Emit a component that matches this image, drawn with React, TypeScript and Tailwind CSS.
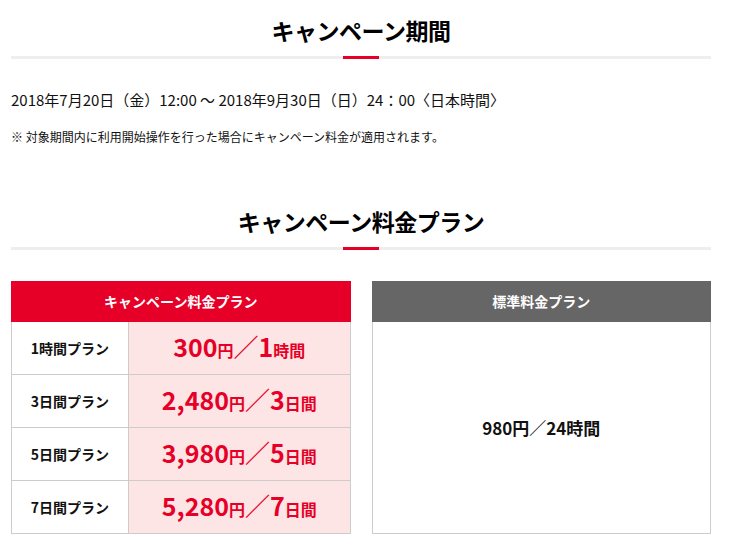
const rows = [
  { label: "1時間プラン", price: "300", unitNum: "1", unit: "時間" },
  { label: "3日間プラン", price: "2,480", unitNum: "3", unit: "日間" },
  { label: "5日間プラン", price: "3,980", unitNum: "5", unit: "日間" },
  { label: "7日間プラン", price: "5,280", unitNum: "7", unit: "日間" },
];

function SectionTitle({ children }: { children: React.ReactNode }) {
  return (
    <div>
      <h2 className="text-center text-[23px] font-bold leading-[36px] tracking-[-0.5px] text-black">
        {children}
      </h2>
      <div className="mt-[8px] flex h-[3px] justify-center bg-[#eeeeee]">
        <div className="h-[3px] w-[36px] bg-[#e60027]" />
      </div>
    </div>
  );
}

export default function App() {
  return (
    <div
      className="min-h-[547px] bg-white pt-[12px] text-[#111]"
      style={{ fontFamily: '"Noto Sans CJK JP", "Noto Sans", sans-serif' }}
    >
      <div className="ml-[11px] w-[700px]">
        <SectionTitle>キャンペーン期間</SectionTitle>

        <p className="mt-[31px] text-[15px] leading-[20px]">
          2018年7月20日（金）12:00 〜 2018年9月30日（日）24：00〈日本時間〉
        </p>
        <p className="mt-[18px] text-[12px] leading-[18px]">
          ※ 対象期間内に利用開始操作を行った場合にキャンペーン料金が適用されます。
        </p>

        <div className="mt-[57px]">
          <SectionTitle>キャンペーン料金プラン</SectionTitle>
        </div>

        <div className="mt-[31px] grid grid-cols-2 gap-[21px]">
          <div>
            <div className="flex h-[41px] items-center justify-center bg-[#e60027] text-[14px] font-bold text-white">
              キャンペーン料金プラン
            </div>
            <div className="border-x border-b border-[#cccccc]">
              {rows.map((r, i) => (
                <div
                  key={r.label}
                  className={`grid grid-cols-[117px_1fr] ${i > 0 ? "h-[53px] border-t border-[#cccccc]" : "h-[52px]"}`}
                >
                  <div className="flex items-center justify-center border-r border-[#cccccc] text-[14px] font-bold">
                    {r.label}
                  </div>
                  <div className="flex items-baseline justify-center bg-[#fde4e5] pt-[9px] font-bold text-[#e60027]">
                    <span className="text-[25px] leading-[30px]">{r.price}</span>
                    <span className="text-[16px]">円</span>
                    <span className="text-[25px] leading-[30px]">／{r.unitNum}</span>
                    <span className="text-[16px]">{r.unit}</span>
                  </div>
                </div>
              ))}
            </div>
          </div>

          <div className="flex flex-col">
            <div className="flex h-[41px] items-center justify-center bg-[#666666] text-[14px] font-bold text-white">
              標準料金プラン
            </div>
            <div className="flex h-[212px] items-center justify-center border-x border-b border-[#cccccc] text-[17px] font-bold">
              980円／24時間
            </div>
          </div>
        </div>
      </div>
    </div>
  );
}
